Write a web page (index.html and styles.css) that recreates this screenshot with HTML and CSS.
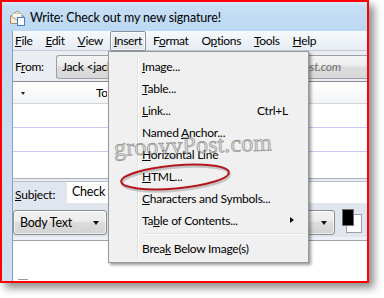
FILE: index.html
```html
<!DOCTYPE html>
<html>
<head>
<meta charset="utf-8">
<link rel="stylesheet" href="styles.css">
</head>
<body>
<div class="frame">
  <div class="titlebar">
    <svg class="appicon" width="17" height="17" viewBox="0 0 17 17">
      <path d="M1.5 7 L8 2 L14.5 7 L14.5 14.5 L1.5 14.5 Z" fill="#f4ead8" stroke="#a58d6c" stroke-width="1"/>
      <path d="M1.5 7 L8 11 L14.5 7" fill="none" stroke="#b59e7c" stroke-width="1"/>
      <path d="M3.5 7.5 L3.5 4.5 L12.5 4.5 L12.5 7.5" fill="#ffffff" stroke="#c9b89c" stroke-width="0.8"/>
      <rect x="8.5" y="8.5" width="7" height="8" fill="#ffffff" stroke="#3d7fd1" stroke-width="1"/>
    </svg>
    <span class="title">Write: Check out my new signature!</span>
  </div>
  <div class="main">
    <div class="sideframe"></div>
    <div class="client">
      <div class="menubar">
        <span class="mi first"><u>F</u>ile</span>
        <span class="mi"><u>E</u>dit</span>
        <span class="mi"><u>V</u>iew</span>
        <span class="mi active"><u>I</u>nsert</span>
        <span class="mi">F<u>o</u>rmat</span>
        <span class="mi">O<u>p</u>tions</span>
        <span class="mi"><u>T</u>ools</span>
        <span class="mi"><u>H</u>elp</span>
      </div>
      <div class="fromrow">
        <span class="lbl">F<u>r</u>om:</span>
        <div class="fromsel">
          <span class="clipname">Jack &lt;jack@groovypost.com&gt;</span>
          <span class="acct"><span>jack@groovypost.com</span></span>
        </div>
      </div>
      <div class="addr">
        <div class="addrhead">
          <span class="sortarrow"></span>
          <span class="tohead">To</span>
        </div>
        <div class="addrrow"></div>
        <div class="addrrow"></div>
        <div class="addrrow last"></div>
      </div>
      <div class="splitter"></div>
      <div class="subjrow">
        <span class="lbl"><u>S</u>ubject:</span>
        <div class="subjinput"><span class="subjtext">Check out my new signature!</span></div>
      </div>
      <div class="toolbar">
        <div class="combo bodytext"><span>Body Text</span><span class="darrow"></span></div>
        <div class="combo fontsel"><span class="darrow"></span></div>
        <div class="colors"><span class="bg"></span><span class="fg"></span></div>
      </div>
      <div class="editor"><span class="caret"></span></div>
    </div>
  </div>

  <div class="menu">
    <div class="gutter"></div>
    <div class="item"><span><u>I</u>mage...</span></div>
    <div class="item"><span><u>T</u>able...</span></div>
    <div class="item"><span><u>L</u>ink...</span><span class="key">Ctrl+L</span></div>
    <div class="item"><span>Named <u>A</u>nchor...</span></div>
    <div class="item"><span><u>H</u>orizontal Line</span></div>
    <div class="item"><span><u>H</u>TML...</span></div>
    <div class="item"><span><u>C</u>haracters and Symbols...</span></div>
    <div class="item"><span>Ta<u>b</u>le of Contents...</span><span class="sub"></span></div>
    <div class="sep"></div>
    <div class="item"><span>Brea<u>k</u> Below Image(s)</span></div>
  </div>

  <div class="watermark">groovyPost.com</div>

  <svg class="ring" width="124" height="40" viewBox="0 0 124 40">
    <ellipse cx="62" cy="21" rx="54" ry="11.5" transform="rotate(-5 62 21)" fill="none" stroke="rgba(0,0,0,0.18)" stroke-width="2.5"/>
    <ellipse cx="61" cy="19" rx="54" ry="11.5" transform="rotate(-5 61 19)" fill="none" stroke="#b3171c" stroke-width="2"/>
  </svg>
</div>
</body>
</html>
```

FILE: styles.css
```css
* { box-sizing: border-box; }
html, body { margin: 0; padding: 0; background: #ffffff; }
body {
  width: 384px; height: 298px; overflow: hidden;
  font-family: Lato, "Open Sans", "Liberation Sans", sans-serif;
  font-size: 12px; letter-spacing: -0.25px; color: #000;
}
u { text-decoration: underline; text-underline-offset: 1px; }

.frame {
  position: relative;
  width: 369px; height: 283px;
  border: 2px solid #ff0000;
  background: #cfdeee;
  box-shadow: 5px 5px 8px rgba(0,0,0,0.45);
  display: flex; flex-direction: column;
}

.titlebar {
  height: 29px; flex: none;
  display: flex; align-items: center;
  padding-left: 7px;
  background: linear-gradient(#dbeafa 0px, #c6dff5 4px, #bcd8f2 100%);
}
.appicon { margin-right: 4px; margin-top: 2px; }
.title { font-size: 12.5px; letter-spacing: -0.15px; color: #000; margin-top: 1px; }

.main { flex: 1; display: flex; min-height: 0; }
.sideframe { width: 10px; flex: none; background: linear-gradient(#c3d9ef, #d3e0ee); }
.client {
  flex: 1; display: flex; flex-direction: column;
  border-left: 1px solid #8d9db2;
  background: #e4e8ef;
  min-width: 0;
}

.menubar {
  height: 20px; flex: none;
  display: flex; align-items: center;
  background: linear-gradient(#f7f9fc, #e6ecf4);
  border-bottom: 1px solid #c3cad4;
  letter-spacing: -0.35px;
}
.mi { padding: 1px 3px 2px; line-height: 15px; border: 1px solid transparent; border-radius: 2px; margin-right: 5px; }
.mi.first { margin-left: -2px; }
.mi.active {
  margin-left: -2px; margin-right: 3px;
  border-color: #8c939c;
  background: linear-gradient(#f2f4f7, #dfe3e8);
  box-shadow: inset 0 0 0 1px rgba(255,255,255,0.7);
}

.fromrow {
  height: 30px; flex: none;
  display: flex; align-items: center;
  padding-left: 2px; padding-top: 1px;
  background: #eaedf2;
}
.lbl { width: 41px; flex: none; }
.fromsel {
  flex: 1; height: 24px;
  display: flex; align-items: center;
  padding-left: 5px;
  border: 1px solid #9a9fa6; border-right: none;
  border-radius: 3px 0 0 3px;
  background: linear-gradient(#f4f4f4 0%, #ececec 45%, #dcdcdc 50%, #d8d8d8 100%);
  white-space: nowrap; overflow: hidden;
}
.clipname { width: 46px; overflow: hidden; flex: none; }
.acct {
  margin-left: 197px; width: 36px; flex: none;
  display: flex; justify-content: flex-end; overflow: hidden;
  font-style: italic; color: #6d6d6d;
}

.addr {
  height: 97px; flex: none;
  border-top: 1px solid #828790;
  background: #ffffff;
  display: flex; flex-direction: column;
}
.addrhead {
  height: 22px; flex: none;
  display: flex; align-items: center;
  background: linear-gradient(#ffffff, #f3f4f6);
  border-bottom: 1px solid #d5d5d5;
}
.sortarrow {
  margin-left: 8px;
  width: 0; height: 0;
  border-left: 2.5px solid transparent; border-right: 2.5px solid transparent;
  border-top: 3px solid #222;
  margin-top: 2px;
}
.tohead { margin-left: 71px; width: 11px; overflow: hidden; white-space: nowrap; }
.addrrow { height: 24px; flex: none; border-bottom: 1px solid #c9c9f2; }
.addrrow.last { border-bottom: none; flex: 1; }

.splitter {
  height: 4px; flex: none;
  border-top: 1px solid #a9b0ba;
  border-bottom: 1px solid #b9c0ca;
  background: #e8ecf1;
}

.subjrow {
  height: 21px; flex: none;
  display: flex; align-items: stretch;
  padding-left: 2px;
  background: #e1e6ee;
}
.subjrow .lbl { width: 52px; display: flex; align-items: center; padding-top: 4px; }
.subjinput {
  flex: 1; background: #ffffff;
  padding-left: 5px; padding-top: 2px;
  font-size: 12.5px;
}
.subjtext { display: block; width: 35px; overflow: hidden; white-space: nowrap; }

.toolbar {
  height: 37px; flex: none;
  display: flex; align-items: center;
  padding-top: 5px;
  background: #e1e6ee;
  border-bottom: 3px solid #eef0f8;
}
.combo {
  height: 25px;
  display: flex; align-items: center;
  border: 1px solid #8d8f93; border-radius: 3px;
  background: linear-gradient(#f3f3f3 0%, #ebebeb 45%, #dddddd 50%, #d2d2d2 100%);
  box-shadow: inset 0 0 0 1px rgba(255,255,255,0.6);
  padding-left: 6px;
  font-size: 12.5px;
}
.bodytext { width: 94px; }
.fontsel { width: 110px; margin-left: 118px; }
.darrow {
  margin-left: auto; margin-right: 7px;
  width: 0; height: 0;
  border-left: 3.5px solid transparent; border-right: 3.5px solid transparent;
  border-top: 4px solid #111;
  flex: none;
}
.colors { position: relative; width: 22px; height: 26px; margin-left: 7px; margin-top: -2px; }
.colors .bg { position: absolute; left: 4px; top: 5px; width: 16px; height: 19px; background: #ffffff; border: 1px solid #9aa0a8; }
.colors .fg { position: absolute; left: 0; top: 0; width: 12px; height: 17px; background: #000000; border: 1px solid #707070; }

.editor {
  flex: 1; background: #ffffff; position: relative;
  border-top: 1px solid #9da3ab;
}
.caret { position: absolute; left: 5px; bottom: 1px; width: 10px; height: 1px; background: #9a9a9a; }

.menu {
  position: absolute; left: 106px; top: 49px;
  width: 201px; height: 212px;
  background: #f0f0f0;
  border: 1px solid #979797;
  box-shadow: 2px 2px 3px rgba(0,0,0,0.4);
  padding: 3px 2px;
}
.gutter {
  position: absolute; left: 28px; top: 2px; bottom: 2px;
  width: 2px; border-left: 1px solid #e0e0e0; border-right: 1px solid #ffffff;
}
.item {
  position: relative;
  height: 22px; display: flex; align-items: center;
  padding-left: 31px; padding-right: 18px;
  white-space: nowrap;
}
.key { margin-left: auto; }
.sub {
  margin-left: auto; margin-right: -6px;
  width: 0; height: 0;
  border-top: 3.5px solid transparent; border-bottom: 3.5px solid transparent;
  border-left: 4px solid #111;
}
.sep { height: 6px; margin-left: 30px; margin-right: 1px; position: relative; }
.sep::after {
  content: ""; position: absolute; left: 0; right: 0; top: 2px;
  height: 1px; background: #e0e0e0; border-bottom: 1px solid #ffffff; box-sizing: content-box;
}

.watermark {
  position: absolute; left: 112px; top: 130px;
  font-family: "Liberation Serif", "DejaVu Serif", serif;
  font-size: 24px; letter-spacing: 0.1px;
  color: rgba(180,180,180,0.35);
  -webkit-text-stroke: 0.8px rgba(95,95,95,0.55);
  transform: rotate(-2deg);
  white-space: nowrap;
  pointer-events: none;
}
.ring { position: absolute; left: 112px; top: 156px; }
```
